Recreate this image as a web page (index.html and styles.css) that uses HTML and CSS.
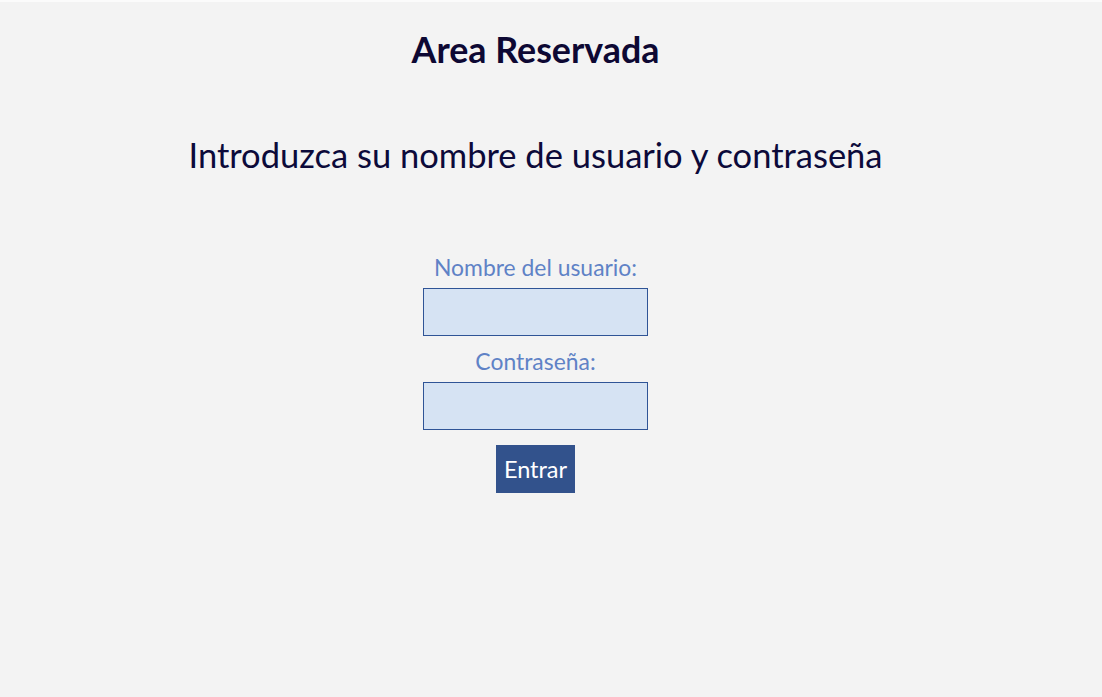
FILE: index.html
```html
<!DOCTYPE html>
<html lang="es">
<head>
<meta charset="utf-8">
<title>Area Reservada</title>
<link rel="stylesheet" href="styles.css">
</head>
<body>
<main class="page">
  <h1 class="title">Area Reservada</h1>
  <h2 class="subtitle">Introduzca su nombre de usuario y contraseña</h2>
  <form class="login">
    <label class="label" for="user">Nombre del usuario:</label>
    <input class="field" id="user" type="text">
    <label class="label" for="pass">Contraseña:</label>
    <input class="field" id="pass" type="password">
    <button class="submit" type="button">Entrar</button>
  </form>
</main>
</body>
</html>
```
FILE: styles.css
```css
html, body {
  margin: 0;
  padding: 0;
  height: 100%;
}
body {
  background: #f3f3f3;
  border-top: 2px solid #fbfbfb;
  box-sizing: border-box;
  font-family: Lato, "Open Sans", sans-serif;
}
.page {
  width: 1071px;
  text-align: center;
}
.title {
  margin: 0;
  padding-top: 28px;
  font-size: 35.8px;
  line-height: 40px;
  font-weight: 700;
  color: #0d0833;
}
.subtitle {
  margin: 0;
  padding-top: 65px;
  font-size: 34.5px;
  line-height: 40px;
  font-weight: 400;
  color: #0c0a3a;
}
.login {
  display: flex;
  flex-direction: column;
  align-items: center;
  padding-top: 78px;
}
.label {
  font-size: 22.9px;
  line-height: 28px;
  color: #5f82c6;
}
.field {
  box-sizing: border-box;
  width: 225px;
  height: 48px;
  margin: 7px 0 11px;
  border: 1px solid #2f5496;
  background: #d6e3f3;
  font-size: 18px;
}
.field:last-of-type { margin-bottom: 15px; }
.submit {
  box-sizing: border-box;
  height: 48px;
  padding: 0 8px;
  border: 0;
  background: #32528c;
  color: #fff;
  font-family: Lato, "Open Sans", sans-serif;
  font-size: 23.5px;
}
```
